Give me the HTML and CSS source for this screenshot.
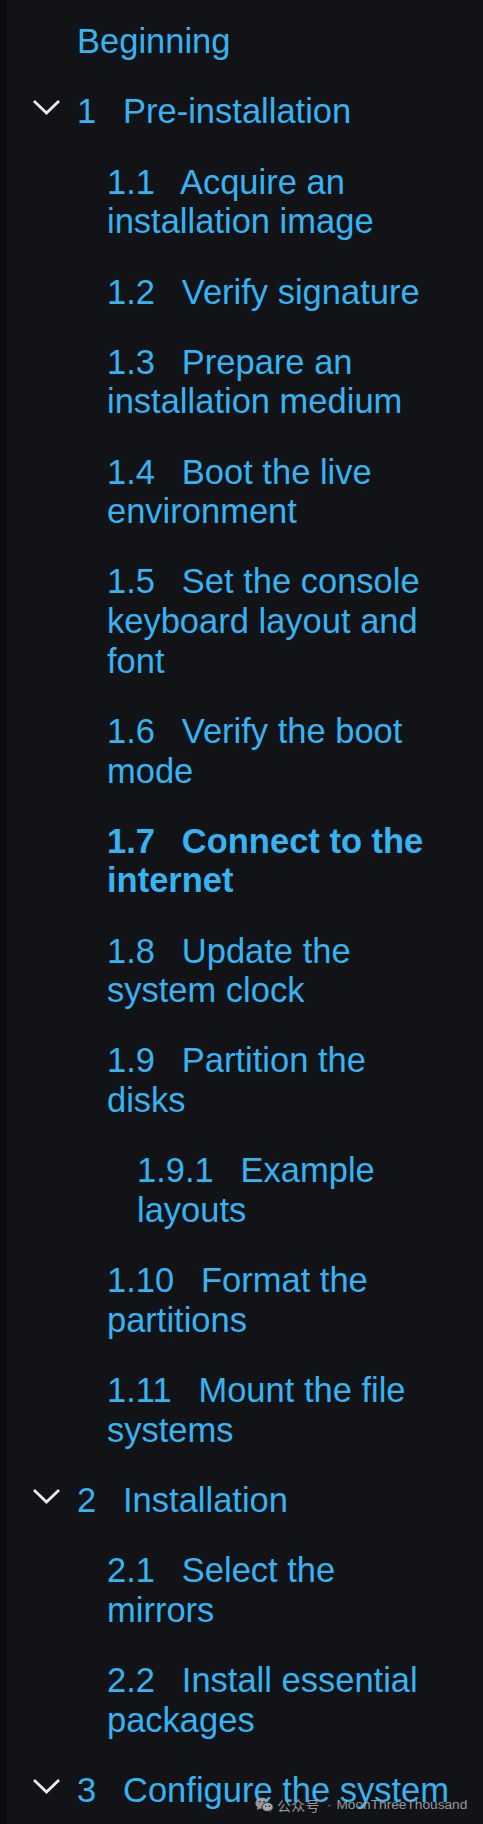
FILE: index.html
```html
<!DOCTYPE html>
<html lang="en">
<head>
<meta charset="utf-8">
<title>Contents</title>
<link rel="stylesheet" href="styles.css">
</head>
<body>
<div class="page">
  <div class="strip"></div>
  <nav class="toc">
    <ul class="lvl1">
      <li>
        <div class="row plain"><a class="link" href="#">Beginning</a></div>
      </li>
      <li>
        <div class="row">
          <span class="toggle"><svg width="27" height="15" viewBox="0 0 27 15"><polyline points="2,2 13.5,13 25,2" /></svg></span>
          <a class="link" href="#"><span class="num">1</span> Pre-installation</a>
        </div>
        <ul class="lvl2">
          <li><a class="row link" href="#"><span class="num">1.1</span> Acquire an installation image</a></li>
          <li><a class="row link" href="#"><span class="num">1.2</span> Verify signature</a></li>
          <li><a class="row link" href="#"><span class="num">1.3</span> Prepare an installation medium</a></li>
          <li><a class="row link" href="#"><span class="num">1.4</span> Boot the live environment</a></li>
          <li><a class="row link" href="#"><span class="num">1.5</span> Set the console keyboard layout and font</a></li>
          <li><a class="row link" href="#"><span class="num">1.6</span> Verify the boot mode</a></li>
          <li><a class="row link active" href="#"><span class="num">1.7</span> Connect to the internet</a></li>
          <li><a class="row link" href="#"><span class="num">1.8</span> Update the system clock</a></li>
          <li>
            <a class="row link" href="#"><span class="num">1.9</span> Partition the disks</a>
            <ul class="lvl3">
              <li><a class="row link" href="#"><span class="num">1.9.1</span> Example layouts</a></li>
            </ul>
          </li>
          <li><a class="row link" href="#"><span class="num">1.10</span> Format the partitions</a></li>
          <li><a class="row link" href="#"><span class="num">1.11</span> Mount the file systems</a></li>
        </ul>
      </li>
      <li>
        <div class="row">
          <span class="toggle"><svg width="27" height="15" viewBox="0 0 27 15"><polyline points="2,2 13.5,13 25,2" /></svg></span>
          <a class="link" href="#"><span class="num">2</span> Installation</a>
        </div>
        <ul class="lvl2">
          <li><a class="row link" href="#"><span class="num">2.1</span> Select the mirrors</a></li>
          <li><a class="row link" href="#"><span class="num">2.2</span> Install essential packages</a></li>
        </ul>
      </li>
      <li>
        <div class="row">
          <span class="toggle"><svg width="27" height="15" viewBox="0 0 27 15"><polyline points="2,2 13.5,13 25,2" /></svg></span>
          <a class="link" href="#"><span class="num">3</span> Configure the system</a>
        </div>
      </li>
    </ul>
  </nav>
</div>
<div class="watermark">
  <svg class="wm-icon" width="19" height="16" viewBox="0 0 19 16">
    <ellipse cx="7" cy="6.2" rx="6.6" ry="5.6" />
    <path d="M2.6 10.2 L1.8 13 L5 11.4 Z" />
    <ellipse class="wm-small" cx="12.6" cy="10" rx="5.6" ry="4.6" />
    <path class="wm-small" d="M15.8 13.2 L16.8 15.6 L13.6 14.3 Z" />
    <circle class="wm-eye" cx="4.8" cy="4.6" r="0.9" />
    <circle class="wm-eye" cx="9" cy="4.6" r="0.9" />
    <circle class="wm-eye" cx="10.8" cy="9.2" r="0.75" />
    <circle class="wm-eye" cx="14.4" cy="9.2" r="0.75" />
  </svg>
  <span class="wm-cn">公众号</span>
  <span class="wm-dot">·</span>
  <span class="wm-name">MoonThreeThousand</span>
</div>
</body>
</html>
```

FILE: styles.css
```css
html, body {
  margin: 0;
  padding: 0;
}

body {
  background: #111317;
  height: 1824px;
  overflow: hidden;
  position: relative;
  font-family: "Liberation Sans", Arial, sans-serif;
}

.page {
  display: flex;
  min-height: 1824px;
}

.strip {
  width: 7px;
  flex: 0 0 7px;
  background: #090b0f;
}

.toc {
  flex: 1;
  padding: 22px 32px 0 25px;
  font-size: 34.5px;
  line-height: 1.15;
}

.toc ul {
  list-style: none;
  margin: 0;
  padding: 0;
}

.lvl2 {
  padding-left: 30px !important;
}

.lvl3 {
  padding-left: 30px !important;
}

.lvl1 > li > .row {
  display: flex;
  align-items: flex-start;
}

.lvl1 > li > .row.plain {
  padding-left: 45px;
}

.row {
  margin-bottom: 30.5px;
}

.lvl2 .row {
  display: block;
  margin-left: 45px;
}

.lvl3 .row {
  margin-left: 45px;
}

.toggle {
  flex: 0 0 45px;
  width: 45px;
  height: 40px;
  display: block;
  padding-top: 8px;
  padding-left: 1px;
  box-sizing: border-box;
}

.toggle svg {
  display: block;
}

.toggle polyline {
  fill: none;
  stroke: #ececec;
  stroke-width: 2.8;
  stroke-linecap: square;
  stroke-linejoin: miter;
}

.link {
  color: #36b3f3;
  text-decoration: none;
}

.link.active {
  font-weight: bold;
}

.num {
  margin-right: 0.5em;
}

.watermark {
  position: absolute;
  left: 255px;
  top: 1796px;
  display: flex;
  align-items: center;
  height: 17px;
  color: #a3a7ad;
  opacity: 0.9;
  font-family: "Liberation Sans", "Noto Sans CJK SC", sans-serif;
  font-size: 13.7px;
  white-space: nowrap;
}

.wm-icon {
  display: block;
  margin-right: 3px;
}

.wm-icon ellipse,
.wm-icon path {
  fill: #a3a7ad;
}

.wm-icon .wm-small {
  fill: #b4b8bd;
  stroke: #111317;
  stroke-width: 0.8;
}

.wm-icon .wm-eye {
  fill: #111317;
}

.wm-cn {
  font-size: 14px;
  letter-spacing: 0.3px;
}

.wm-dot {
  margin: 0 5px 0 7px;
}
```
